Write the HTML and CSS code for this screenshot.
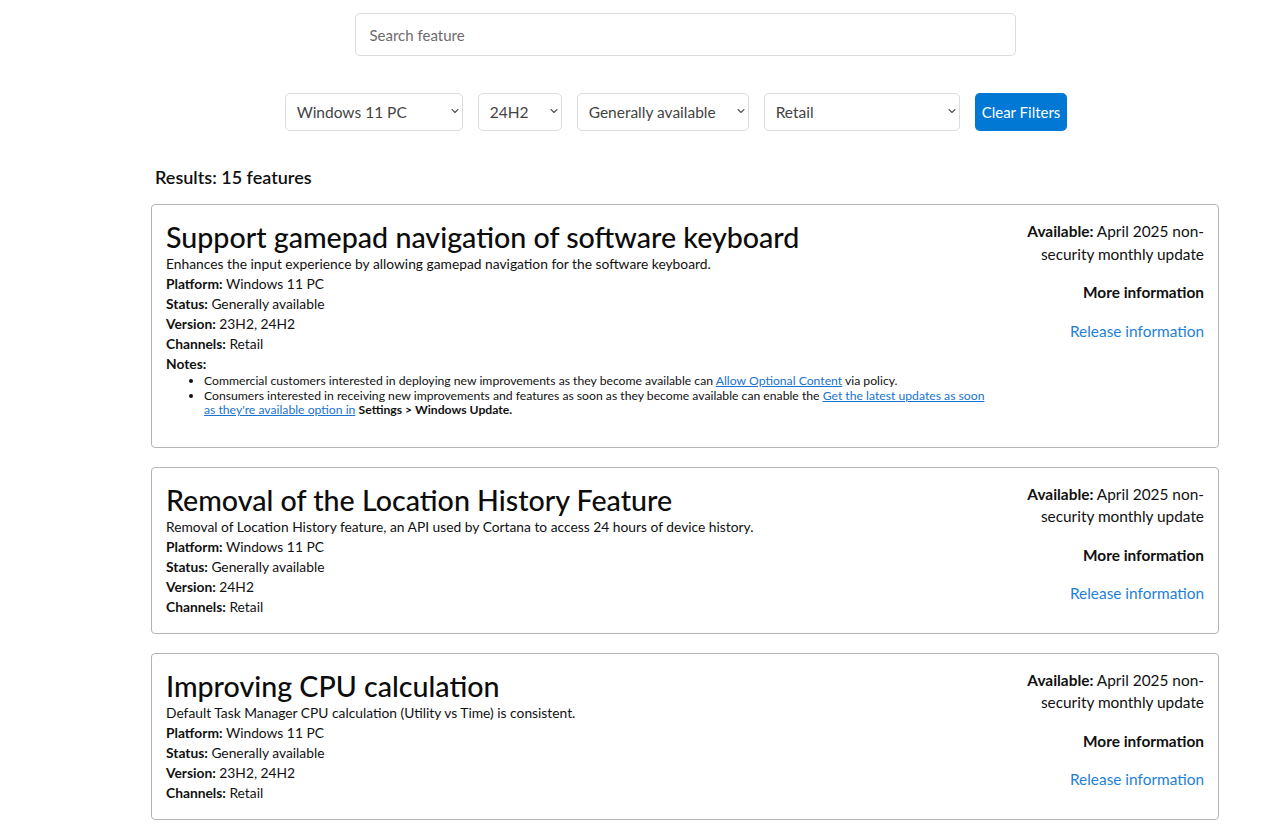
FILE: index.html
```html
<!DOCTYPE html>
<html lang="en">
<head>
    <meta charset="UTF-8">
    <meta name="viewport" content="width=device-width, initial-scale=1.0">
    <title>Windows Feature Tracker</title>
    <link rel="stylesheet" href="styles.css">
</head>
<body>

<div class="page">
    <div class="search-bar">
        <input type="text" id="search" class="search-input" placeholder="Search feature">
    </div>

    <div class="filters">
        <div class="select-wrap w-platform">
            <select id="platform">
                <option>Windows 11 PC</option>
            </select>
            <svg class="chevron" viewBox="0 0 10 10"><path d="M2 3.5l3 3 3-3" fill="none" stroke="#555" stroke-width="1.1" stroke-linecap="round" stroke-linejoin="round"/></svg>
        </div>
        <div class="select-wrap w-version">
            <select id="version">
                <option>24H2</option>
            </select>
            <svg class="chevron" viewBox="0 0 10 10"><path d="M2 3.5l3 3 3-3" fill="none" stroke="#555" stroke-width="1.1" stroke-linecap="round" stroke-linejoin="round"/></svg>
        </div>
        <div class="select-wrap w-status">
            <select id="status">
                <option>Generally available</option>
            </select>
            <svg class="chevron" viewBox="0 0 10 10"><path d="M2 3.5l3 3 3-3" fill="none" stroke="#555" stroke-width="1.1" stroke-linecap="round" stroke-linejoin="round"/></svg>
        </div>
        <div class="select-wrap w-channel">
            <select id="channel">
                <option>Retail</option>
            </select>
            <svg class="chevron" viewBox="0 0 10 10"><path d="M2 3.5l3 3 3-3" fill="none" stroke="#555" stroke-width="1.1" stroke-linecap="round" stroke-linejoin="round"/></svg>
        </div>
        <button id="clearFilters" class="btn-clear">Clear Filters</button>
    </div>

    <h5 class="results">Results: 15 features</h5>

    <div class="feature-card">
        <div class="feature-main">
            <h3 class="feature-title">Support gamepad navigation of software keyboard</h3>
            <p class="feature-desc">Enhances the input experience by allowing gamepad navigation for the software keyboard.</p>
            <p class="feature-row"><strong>Platform:</strong> Windows 11 PC</p>
            <p class="feature-row"><strong>Status:</strong> Generally available</p>
            <p class="feature-row"><strong>Version:</strong> 23H2, 24H2</p>
            <p class="feature-row"><strong>Channels:</strong> Retail</p>
            <p class="feature-row"><strong>Notes:</strong></p>
            <ul class="notes">
                <li>Commercial customers interested in deploying new improvements as they become available can <a href="#">Allow Optional Content</a> via policy.</li>
                <li>Consumers interested in receiving new improvements and features as soon as they become available can enable the <a href="#">Get the latest updates as soon as they're available option in</a> <strong>Settings &gt; Windows Update.</strong></li>
            </ul>
        </div>
        <div class="feature-side">
            <p><strong>Available:</strong> April 2025 non-security monthly update</p>
            <p><strong>More information</strong></p>
            <p><a href="#">Release information</a></p>
        </div>
    </div>

    <div class="feature-card">
        <div class="feature-main">
            <h3 class="feature-title">Removal of the Location History Feature</h3>
            <p class="feature-desc">Removal of Location History feature, an API used by Cortana to access 24 hours of device history.</p>
            <p class="feature-row"><strong>Platform:</strong> Windows 11 PC</p>
            <p class="feature-row"><strong>Status:</strong> Generally available</p>
            <p class="feature-row"><strong>Version:</strong> 24H2</p>
            <p class="feature-row"><strong>Channels:</strong> Retail</p>
        </div>
        <div class="feature-side">
            <p><strong>Available:</strong> April 2025 non-security monthly update</p>
            <p><strong>More information</strong></p>
            <p><a href="#">Release information</a></p>
        </div>
    </div>

    <div class="feature-card">
        <div class="feature-main">
            <h3 class="feature-title">Improving CPU calculation</h3>
            <p class="feature-desc">Default Task Manager CPU calculation (Utility vs Time) is consistent.</p>
            <p class="feature-row"><strong>Platform:</strong> Windows 11 PC</p>
            <p class="feature-row"><strong>Status:</strong> Generally available</p>
            <p class="feature-row"><strong>Version:</strong> 23H2, 24H2</p>
            <p class="feature-row"><strong>Channels:</strong> Retail</p>
        </div>
        <div class="feature-side">
            <p><strong>Available:</strong> April 2025 non-security monthly update</p>
            <p><strong>More information</strong></p>
            <p><a href="#">Release information</a></p>
        </div>
    </div>
</div>

</body>
</html>
```

FILE: styles.css
```css
body {
    font-family: 'Segoe UI', Lato, 'Open Sans', Arial, sans-serif;
    margin: 0;
    background-color: #fff;
    color: #111;
}
.page {
    width: 1068px;
    margin-left: 151px;
}
.search-bar {
    display: flex;
    justify-content: center;
    padding-top: 13px;
}
.search-input {
    width: 661px;
    height: 43px;
    box-sizing: border-box;
    padding: 0 14px;
    border: 1px solid #dcdcdc;
    border-radius: 5px;
    font-family: inherit;
    font-size: 15px;
    color: #333;
}
.search-input::placeholder {
    color: #6c6c6c;
}
.filters {
    display: flex;
    justify-content: center;
    gap: 15px;
    margin-top: 37px;
    padding-right: 18px;
}
.select-wrap {
    position: relative;
    height: 38px;
}
.select-wrap select {
    appearance: none;
    -webkit-appearance: none;
    width: 100%;
    height: 100%;
    padding: 0 30px 0 11px;
    border: 1px solid #dcdcdc;
    border-radius: 5px;
    background: #fff;
    font-family: inherit;
    font-size: 15.5px;
    color: #444;
}
.chevron {
    position: absolute;
    right: 3px;
    top: 13px;
    width: 10px;
    height: 10px;
    pointer-events: none;
}
.w-platform { width: 178px; }
.w-version { width: 84px; }
.w-status { width: 172px; }
.w-channel { width: 196px; }
.btn-clear {
    height: 38px;
    padding: 0 7px;
    border: none;
    border-radius: 5px;
    background-color: #0078d4;
    color: #fff;
    font-family: inherit;
    font-size: 15px;
    cursor: pointer;
}
.results {
    margin: 34px 0 15px 4px;
    font-size: 18px;
    font-weight: 600;
    line-height: 24px;
}
.feature-card {
    display: flex;
    margin-bottom: 19px;
    padding: 15px 14px 16px 14px;
    border: 1px solid #b4b4b4;
    border-radius: 4px;
}
.feature-main {
    flex: 1;
}
.feature-title {
    margin: 0;
    font-size: 28.6px;
    font-weight: 500;
    line-height: 34px;
    color: #0c0c0c;
}
.feature-desc,
.feature-row {
    margin: 0;
    font-size: 13.8px;
    line-height: 20px;
}
.notes {
    margin: 0 0 13px 0;
    padding-left: 38px;
    font-size: 12.2px;
    line-height: 14.5px;
}
.notes a {
    color: #1a73d0;
}
.feature-side {
    width: 215px;
    text-align: right;
    font-size: 15.4px;
    line-height: 22.5px;
}
.feature-side p {
    margin: 0 0 16px 0;
}
.feature-side p:last-child {
    margin-bottom: 12px;
}
.feature-side a {
    text-decoration: none;
    color: #1f7fd8;
}
```
